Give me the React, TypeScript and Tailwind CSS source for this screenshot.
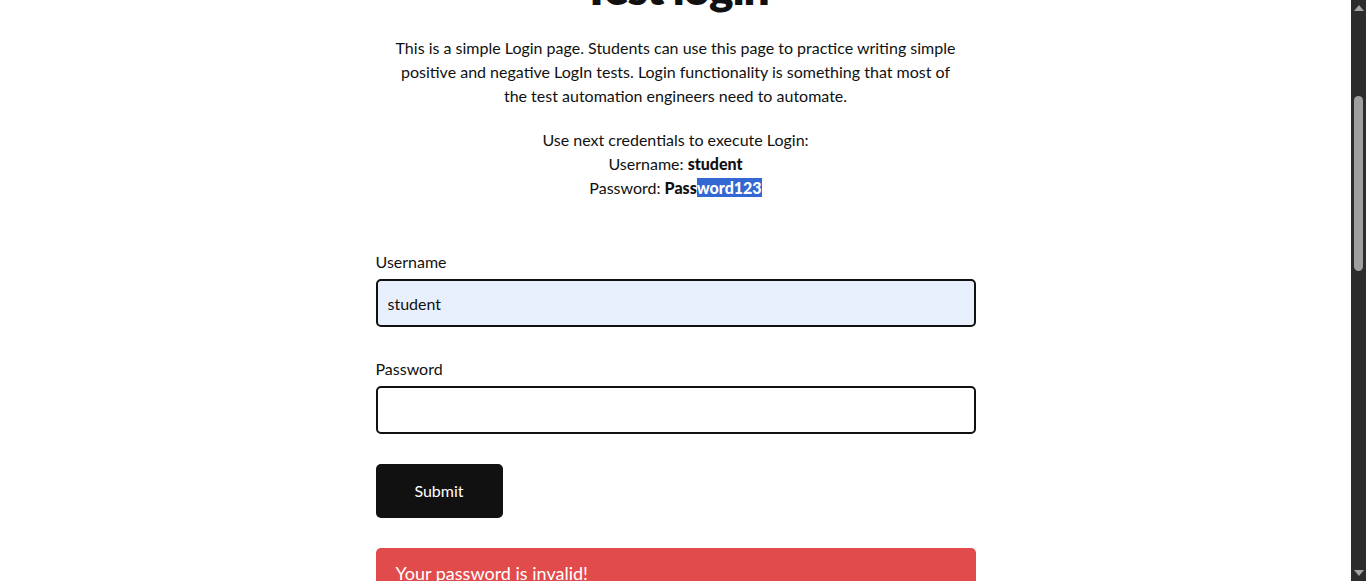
import { useState } from "react"

function FakeScrollbar() {
  return (
    <div className="w-[15px] h-full bg-[#2c2c2c] flex flex-col items-center shrink-0">
      <div className="mt-[5px] w-0 h-0 border-l-[5px] border-r-[5px] border-b-[6px] border-l-transparent border-r-transparent border-b-[#a3a3a3]" />
      <div className="mt-[85px] w-[9px] h-[175px] rounded-full bg-[#9f9f9f]" />
      <div className="flex-1" />
      <div className="mb-[5px] w-0 h-0 border-l-[5px] border-r-[5px] border-t-[6px] border-l-transparent border-r-transparent border-t-[#a3a3a3]" />
    </div>
  )
}

export default function App() {
  const [username, setUsername] = useState("student")
  const [password, setPassword] = useState("")

  return (
    <div className="h-[581px] flex overflow-hidden bg-white text-[#111] font-['Lato','Liberation_Sans',sans-serif]">
      <main className="flex-1 overflow-hidden">
        <div className="w-[600px] mx-auto -mt-[40px] flex flex-col">
          {/* Title */}
          <h2 className="text-center text-[46px] leading-[56px] font-extrabold tracking-tight">
            Test login
          </h2>

          <p className="mt-[20px] mx-auto max-w-[562px] text-center text-[16px] leading-[24px]">
            This is a simple Login page. Students can use this page to practice writing simple
            positive and negative LogIn tests. Login functionality is something that most of the
            test automation engineers need to automate.
          </p>

          <p className="mt-[20px] text-center text-[16px] leading-[24px]">
            Use next credentials to execute Login:
            <br />
            Username: <strong className="font-black">student</strong>
            <br />
            Password:{" "}
            <strong className="font-black">
              Pass<span className="bg-[#3367d1] text-white">word123</span>
            </strong>
          </p>

          {/* Form */}
          <form className="mt-[50px] flex flex-col" onSubmit={(e) => e.preventDefault()}>
            <label className="text-[16px] leading-[24px]">Username</label>
            <input
              value={username}
              onChange={(e) => setUsername(e.target.value)}
              className="mt-[5px] h-[48px] w-full rounded-[5px] border-2 border-[#111] bg-[#e8f0fe] px-[10px] text-[16px] outline-none"
            />

            <label className="mt-[30px] text-[16px] leading-[24px]">Password</label>
            <input
              type="password"
              value={password}
              onChange={(e) => setPassword(e.target.value)}
              className="mt-[5px] h-[48px] w-full rounded-[5px] border-2 border-[#111] bg-white px-[10px] text-[16px] outline-none"
            />

            <button
              type="submit"
              className="mt-[30px] w-[127px] h-[54px] rounded-[5px] bg-[#111] text-white text-[16px]"
            >
              Submit
            </button>
          </form>

          {/* Error */}
          <div className="mt-[30px] rounded-[5px] bg-[#e24b4b] px-[20px] py-[12px] text-white text-[18px] leading-[26px]">
            Your password is invalid!
          </div>
        </div>
      </main>
      <FakeScrollbar />
    </div>
  )
}
